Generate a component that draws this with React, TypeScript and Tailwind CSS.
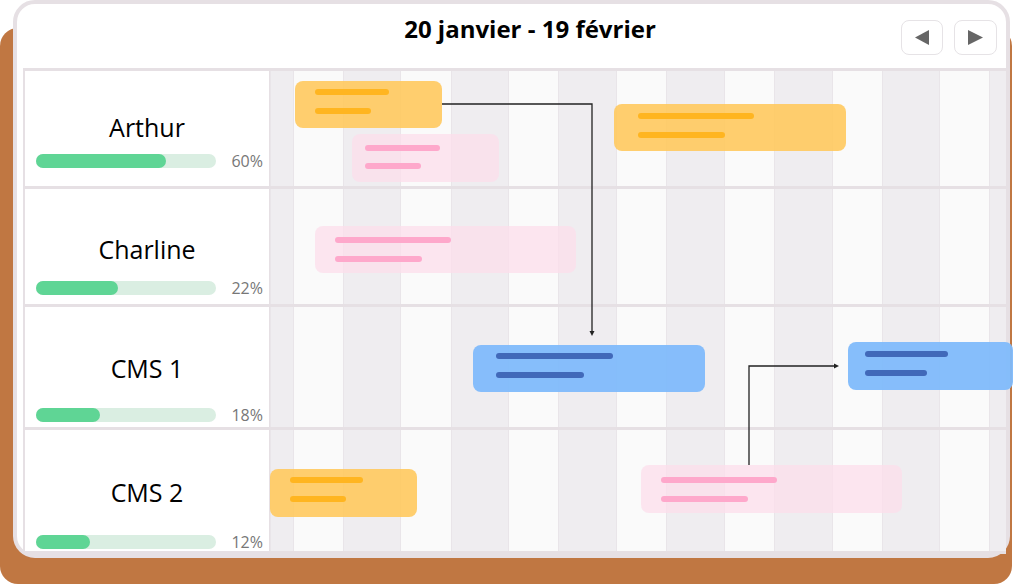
import React from "react";

type Bar = {
  kind: "yellow" | "pink" | "blue";
  left: number;
  top: number;
  w: number;
  h: number;
  pl: number;
  l1t: number;
  l1w: number;
  l2t: number;
  l2w: number;
};

type Row = {
  name: string;
  pct: string;
  fill: number;
  height: string;
  nameMt: string;
  barMt: string;
  bars: Bar[];
};

const rows: Row[] = [
  {
    name: "Arthur",
    pct: "60%",
    fill: 130,
    height: "h-[118px]",
    nameMt: "mt-[39px]",
    barMt: "mt-[10px]",
    bars: [
      { kind: "yellow", left: 25, top: 10, w: 147, h: 47, pl: 20, l1t: 8, l1w: 74, l2t: 27, l2w: 56 },
      { kind: "pink", left: 82, top: 63, w: 147, h: 48, pl: 13, l1t: 11, l1w: 75, l2t: 29, l2w: 56 },
      { kind: "yellow", left: 344, top: 33, w: 232, h: 47, pl: 24, l1t: 9, l1w: 116, l2t: 28, l2w: 87 },
    ],
  },
  {
    name: "Charline",
    pct: "22%",
    fill: 82,
    height: "h-[118px]",
    nameMt: "mt-[43px]",
    barMt: "mt-[15px]",
    bars: [
      { kind: "pink", left: 45, top: 37, w: 261, h: 47, pl: 20, l1t: 11, l1w: 116, l2t: 30, l2w: 87 },
    ],
  },
  {
    name: "CMS 1",
    pct: "18%",
    fill: 64,
    height: "h-[123px]",
    nameMt: "mt-[44px]",
    barMt: "mt-[23px]",
    bars: [
      { kind: "blue", left: 203, top: 38, w: 232, h: 47, pl: 23, l1t: 8, l1w: 117, l2t: 27, l2w: 88 },
      { kind: "blue", left: 578, top: 35, w: 165, h: 48, pl: 17, l1t: 9, l1w: 83, l2t: 28, l2w: 62 },
    ],
  },
  {
    name: "CMS 2",
    pct: "12%",
    fill: 54,
    height: "h-[124px]",
    nameMt: "mt-[45px]",
    barMt: "mt-[26px]",
    bars: [
      { kind: "yellow", left: 0, top: 39, w: 147, h: 48, pl: 20, l1t: 8, l1w: 73, l2t: 27, l2w: 56 },
      { kind: "pink", left: 371, top: 35, w: 261, h: 48, pl: 20, l1t: 12, l1w: 116, l2t: 31, l2w: 87 },
    ],
  },
];

const stripes = [23, 50, 57, 51, 57, 50, 58, 50, 58, 50, 58, 50, 57, 50, 17];

const boxCls: Record<Bar["kind"], string> = {
  yellow: "bg-[#ffc95e]/90",
  pink: "bg-[#fcdeeb]/75",
  blue: "bg-[#7fbbfb]/95",
};
const lineCls: Record<Bar["kind"], string> = {
  yellow: "bg-[#ffb520]",
  pink: "bg-[#fea8cb]",
  blue: "bg-[#4169b9]",
};

function TaskBar({ b }: { b: Bar }) {
  return (
    <div
      className={`absolute rounded-[8px] ${boxCls[b.kind]}`}
      style={{ left: b.left, top: b.top, width: b.w, height: b.h }}
    >
      <div
        className={`absolute h-[6px] rounded-full ${lineCls[b.kind]}`}
        style={{ left: b.pl, top: b.l1t, width: b.l1w }}
      />
      <div
        className={`absolute h-[6px] rounded-full ${lineCls[b.kind]}`}
        style={{ left: b.pl, top: b.l2t, width: b.l2w }}
      />
    </div>
  );
}

function Stripes() {
  return (
    <div className="flex h-full">
      {stripes.map((w, i) => (
        <div
          key={i}
          className={`h-full border-l border-[#e9e5e9] ${i % 2 === 0 ? "bg-[#efedf0]" : "bg-[#fafafa]"}`}
          style={{ width: w }}
        />
      ))}
    </div>
  );
}

export default function App() {
  return (
    <div
      className="relative w-[1013px] h-[584px] bg-white overflow-hidden"
      style={{ fontFamily: '"Open Sans", "Noto Sans", sans-serif' }}
    >
      <div className="pt-[28px]">
        <div className="flex flex-col h-[556px] w-[1012px] rounded-[18px] bg-[#c07742]">
          <div className="-mt-[28px] ml-[13px] w-[997px] h-[558px] rounded-[22px] border-4 border-[#e6e0e4] bg-white flex flex-col">
            {/* header */}
            <div className="h-[64px] flex items-start pl-[46px] pr-[9px]">
              <div className="flex-1" />
              <div className="mt-[9px] text-[24px] leading-[32px] font-bold text-black whitespace-nowrap">
                20 janvier - 19 février
              </div>
              <div className="flex-1 flex justify-end gap-[11px] mt-[16px]">
                <button className="w-[42px] h-[35px] rounded-[8px] border border-[#e6e3e6] bg-white flex items-center justify-center">
                  <svg width="14" height="15" viewBox="0 0 14 15">
                    <path d="M0 7.5 L14 0 L14 15 Z" fill="#666666" />
                  </svg>
                </button>
                <button className="w-[43px] h-[35px] rounded-[8px] border border-[#e6e3e6] bg-white flex items-center justify-center">
                  <svg width="15" height="15" viewBox="0 0 15 15">
                    <path d="M15 7.5 L0 0 L0 15 Z" fill="#666666" />
                  </svg>
                </button>
              </div>
            </div>
            {/* table */}
            <div className="ml-[6px] w-[983px] border-l-2 border-t-[3px] border-[#e6e0e4] flex flex-col">
              {rows.map((r) => (
                <div key={r.name} className={`flex ${r.height} border-b-[3px] border-[#e6e0e4]`}>
                  <div className="w-[245px] shrink-0 bg-white border-r border-[#e6e0e4] flex flex-col">
                    <div className={`${r.nameMt} text-center text-[25px] leading-[34px] text-black`}>
                      {r.name}
                    </div>
                    <div className={`${r.barMt} flex items-center pl-[11px] pr-[6px]`}>
                      <div className="w-[180px] h-[14px] rounded-full bg-[#daeee2]">
                        <div className="h-full rounded-full bg-[#5fd595]" style={{ width: r.fill }} />
                      </div>
                      <div className="flex-1 text-right text-[16px] leading-[14px] text-[#777777]">{r.pct}</div>
                    </div>
                  </div>
                  <div className="relative flex-1">
                    <Stripes />
                    {r.bars.map((b, i) => (
                      <TaskBar key={i} b={b} />
                    ))}
                  </div>
                </div>
              ))}
            </div>
          </div>
        </div>
      </div>
      <svg
        className="absolute inset-0 pointer-events-none"
        width="1013"
        height="584"
        viewBox="0 0 1013 584"
      >
        <path d="M442 104 H592 V333" fill="none" stroke="#222" strokeWidth="1.3" />
        <path d="M589.5 331 L594.5 331 L592 336 Z" fill="#222" />
        <path d="M749 465 V366 H836" fill="none" stroke="#222" strokeWidth="1.3" />
        <path d="M834 363.5 L834 368.5 L839 366 Z" fill="#222" />
      </svg>
    </div>
  );
}
